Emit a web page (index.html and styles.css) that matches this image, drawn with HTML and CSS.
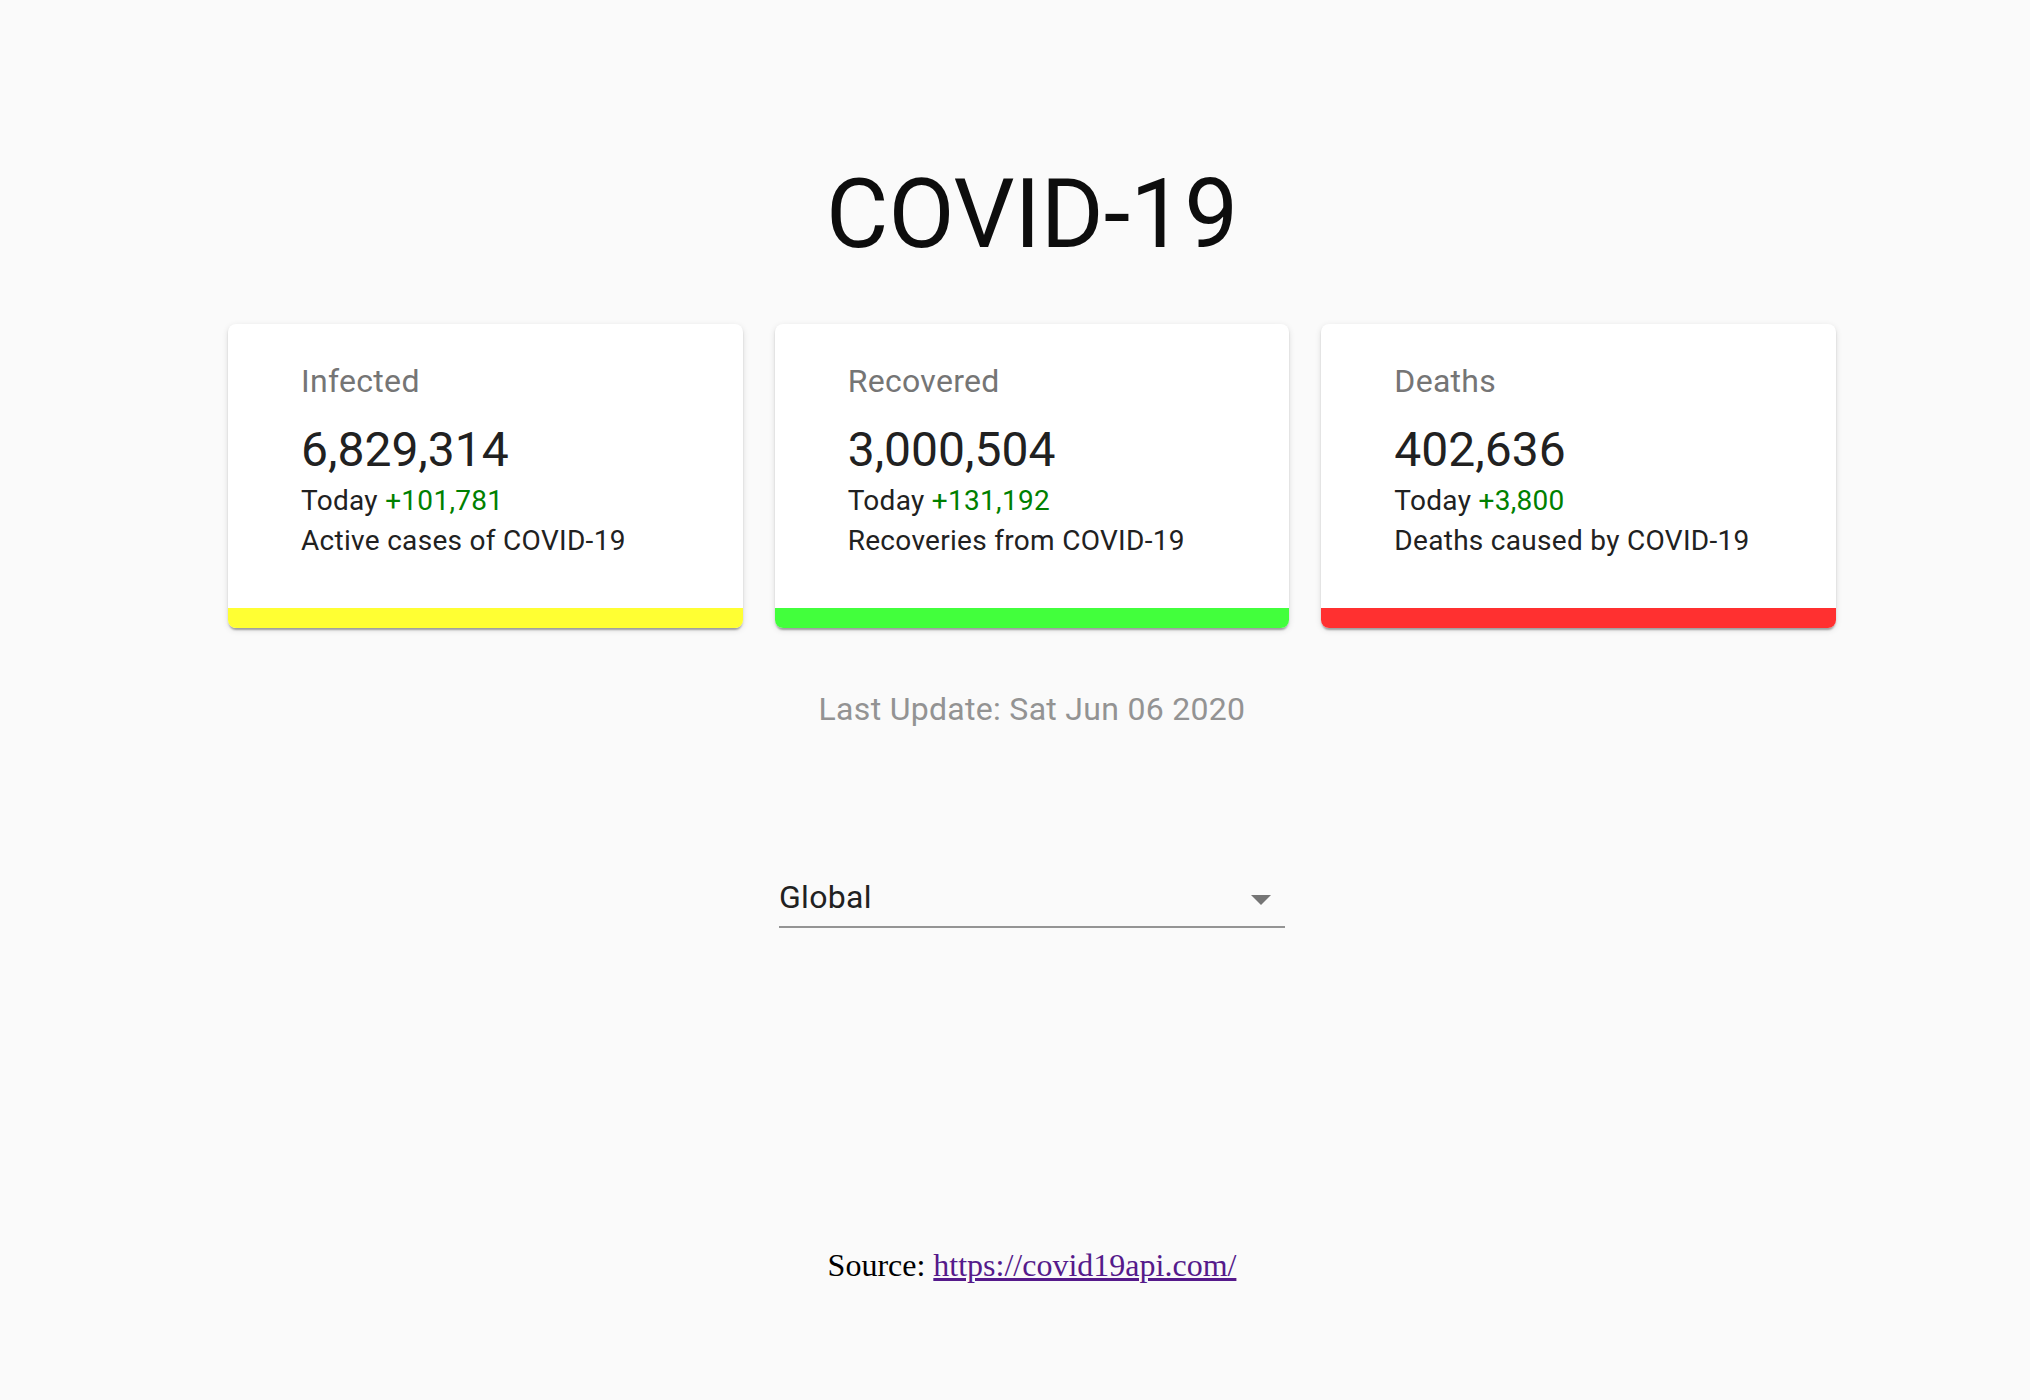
FILE: index.html
```html
<!DOCTYPE html>
<html lang="en">
<head>
<meta charset="utf-8">
<title>COVID-19</title>
<link rel="stylesheet" href="styles.css">
</head>
<body>
<div class="page">
  <h1 class="title">COVID-19</h1>
  <div class="cards">
    <div class="card">
      <div class="card-content">
        <div class="label">Infected</div>
        <div class="number">6,829,314</div>
        <div class="line">Today <span class="plus">+101,781</span></div>
        <div class="line">Active cases of COVID-19</div>
      </div>
      <div class="bar bar-yellow"></div>
    </div>
    <div class="card">
      <div class="card-content">
        <div class="label">Recovered</div>
        <div class="number">3,000,504</div>
        <div class="line">Today <span class="plus">+131,192</span></div>
        <div class="line">Recoveries from COVID-19</div>
      </div>
      <div class="bar bar-green"></div>
    </div>
    <div class="card">
      <div class="card-content">
        <div class="label">Deaths</div>
        <div class="number">402,636</div>
        <div class="line">Today <span class="plus">+3,800</span></div>
        <div class="line">Deaths caused by COVID-19</div>
      </div>
      <div class="bar bar-red"></div>
    </div>
  </div>
  <div class="update">Last Update: Sat Jun 06 2020</div>
  <div class="select">
    <span class="select-value">Global</span>
    <svg class="select-arrow" viewBox="0 0 24 24" width="48" height="48"><path d="M7 10l5 5 5-5z" fill="#757575"/></svg>
  </div>
  <div class="source">Source: <a href="https://covid19api.com/">https://covid19api.com/</a></div>
</div>
</body>
</html>
```

FILE: styles.css
```css
html, body {
  margin: 0;
  padding: 0;
  background: #fafafa;
}

.page {
  padding: 156px 0 100px 34px;
  display: flex;
  flex-direction: column;
  align-items: center;
  font-family: Roboto, "Liberation Sans", sans-serif;
}

.title {
  margin: 0;
  font-size: 96px;
  font-weight: 400;
  line-height: 117px;
  color: #0d0d0d;
  text-align: center;
}

.cards {
  margin-top: 51px;
  width: 1608px;
  display: grid;
  grid-template-columns: 1fr 1fr 1fr;
  gap: 32px;
}

.card {
  background: #fff;
  border-radius: 8px;
  overflow: hidden;
  box-shadow: 0 4px 2px -2px rgba(0,0,0,0.2), 0 2px 2px 0 rgba(0,0,0,0.14), 0 2px 6px 0 rgba(0,0,0,0.12);
  display: flex;
  flex-direction: column;
}

.card-content {
  padding: 33px 32px 47px 73px;
}

.label {
  font-size: 32px;
  line-height: 48px;
  letter-spacing: 0.3px;
  color: #757575;
  margin-bottom: 14px;
}

.number {
  font-size: 48px;
  line-height: 62px;
  color: #212121;
}

.line {
  font-size: 28px;
  line-height: 40px;
  letter-spacing: 0.3px;
  color: #212121;
}

.plus {
  color: #008000;
}

.bar {
  height: 20px;
}

.bar-yellow { background: #ffff33; }
.bar-green { background: #42ff3c; }
.bar-red { background: #ff3030; }

.update {
  margin-top: 57px;
  font-size: 32px;
  line-height: 48px;
  letter-spacing: 0.3px;
  color: #939393;
  text-align: center;
}

.select {
  margin-top: 140px;
  width: 506px;
  box-sizing: border-box;
  display: flex;
  align-items: center;
  justify-content: space-between;
  border-bottom: 2px solid #949494;
  padding-bottom: 5px;
  height: 55px;
  position: relative;
}

.select-value {
  font-size: 32px;
  line-height: 48px;
  letter-spacing: 0.3px;
  color: #212121;
}

.select-arrow {
  position: absolute;
  right: 0;
  top: 2px;
}

.source {
  margin-top: 313px;
  font-family: "Liberation Serif", serif;
  font-size: 32px;
  line-height: 48px;
  color: #000;
  text-align: center;
}

.source a {
  color: #551a8b;
  text-decoration: underline;
}
```
